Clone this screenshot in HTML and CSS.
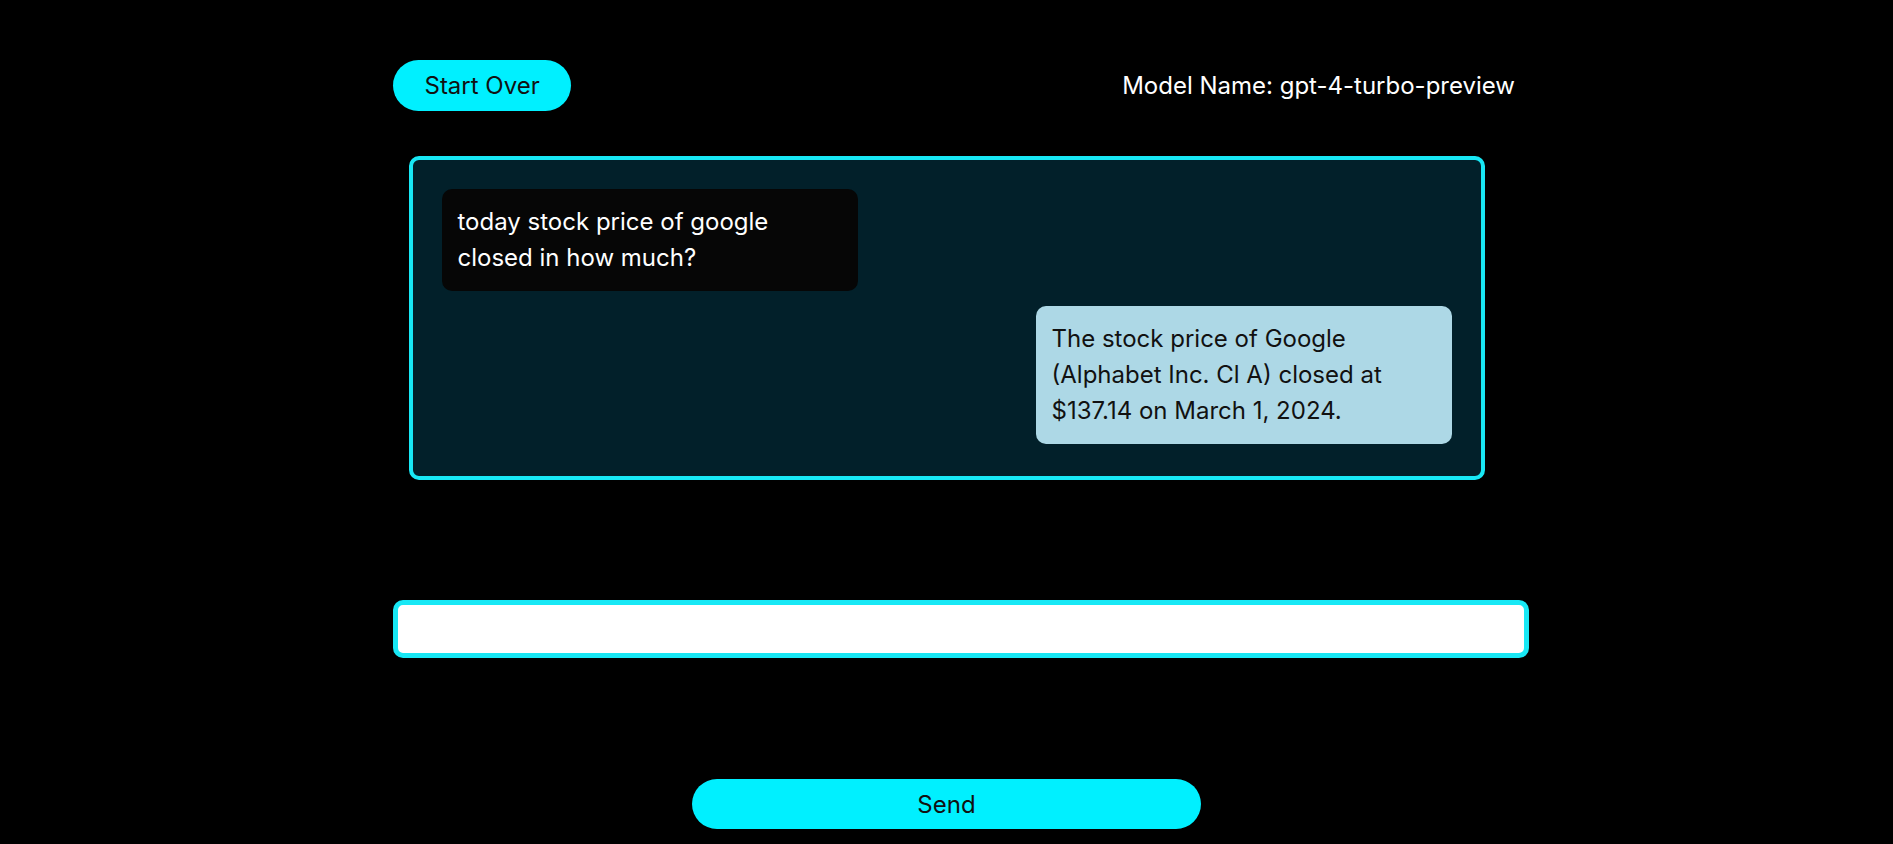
FILE: index.html
```html
<!DOCTYPE html>
<html lang="en">
<head>
<meta charset="utf-8">
<title>Chat</title>
<link rel="stylesheet" href="styles.css">
</head>
<body>
<div class="page">
  <header class="topbar">
    <button class="btn start-over">Start Over</button>
    <div class="model-name">Model Name: gpt-4-turbo-preview</div>
  </header>

  <section class="chat">
    <div class="bubble user">today stock price of google closed in how much?</div>
    <div class="bubble assistant">The stock price of Google (Alphabet Inc. Cl A) closed at $137.14 on March 1, 2024.</div>
  </section>

  <div class="input-row">
    <input class="prompt" type="text" autofocus>
  </div>

  <div class="send-row">
    <button class="btn send">Send</button>
  </div>
</div>
<script src="script.js"></script>
</body>
</html>
```
FILE: styles.css
```css
* { box-sizing: border-box; }

html, body {
  margin: 0;
  background: #000;
  font-family: Inter, "Noto Sans", sans-serif;
  color: #fff;
}

.page {
  padding-top: 60px;
}

.topbar {
  display: flex;
  align-items: center;
  justify-content: space-between;
  margin-left: 393px;
  width: 1122px;
}

.btn {
  border: none;
  background: #00f0ff;
  color: #111;
  font-family: Inter, "Noto Sans", sans-serif;
  font-size: 24px;
  cursor: pointer;
}

.start-over {
  height: 51px;
  padding: 0 31.5px;
  border-radius: 26px;
}

.model-name {
  font-size: 24px;
  color: #fff;
}

.chat {
  width: 1076px;
  margin: 45px auto 0;
  border: 4px solid #18e8f5;
  border-radius: 10px;
  background: #02202a;
  padding: 29px 29px 32px;
  display: flex;
  flex-direction: column;
  gap: 15px;
}

.bubble {
  width: 416px;
  padding: 15px 16px;
  border-radius: 10px;
  font-size: 24px;
  line-height: 36px;
}

.user {
  background: #060606;
  color: #fff;
  align-self: flex-start;
}

.assistant {
  background: #add8e6;
  color: #111;
  align-self: flex-end;
}

.input-row {
  margin-top: 120px;
  margin-left: 393px;
}

.prompt {
  display: block;
  width: 1136px;
  height: 58px;
  border: 5px solid #18e8f5;
  border-radius: 10px;
  background: #fff;
  padding: 0 7px;
  font-family: Inter, "Noto Sans", sans-serif;
  font-size: 24px;
  color: #111;
  caret-color: #111;
  outline: none;
}

.send-row {
  display: flex;
  justify-content: center;
  margin-top: 121px;
}

.send {
  width: 509px;
  height: 50px;
  border-radius: 25px;
}
```
FILE: script.js
```js
document.querySelector('.prompt').focus();
```
